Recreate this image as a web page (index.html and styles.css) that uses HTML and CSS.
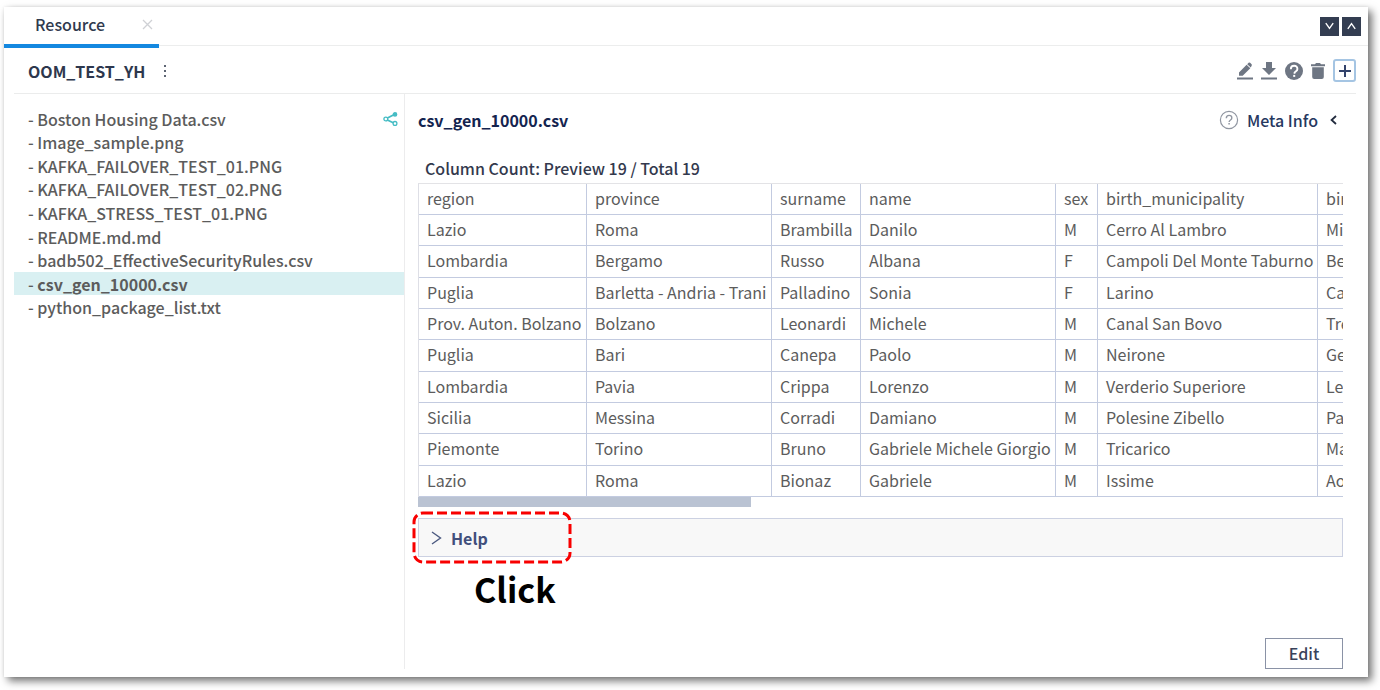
FILE: index.html
```html
<!DOCTYPE html>
<html lang="en">
<head>
<meta charset="utf-8">
<title>Resource</title>
<link rel="stylesheet" href="styles.css">
</head>
<body>
<div class="window">
  <header class="tabbar">
    <div class="tab">
      <span class="tab-name">Resource</span>
      <button class="icon-btn" aria-label="Close tab"><svg width="11" height="11" viewBox="0 0 11 11" fill="none" stroke="#cfd1d5" stroke-width="1.3"><path d="M1 1l9 9M10 1l-9 9"/></svg></button>
    </div>
    <div class="nav-buttons">
      <button class="nav-btn" aria-label="Next"><svg width="9" height="8" viewBox="0 0 9 8" fill="none" stroke="#fff" stroke-width="1.4"><path d="M.8 1.2l3.7 5.2 3.7-5.2"/></svg></button>
      <button class="nav-btn" aria-label="Previous"><svg width="9" height="8" viewBox="0 0 9 8" fill="none" stroke="#fff" stroke-width="1.4"><path d="M.8 6.8l3.7-5.2 3.7 5.2"/></svg></button>
    </div>
  </header>

  <div class="content">
    <div class="titlebar">
      <h1 class="title">OOM_TEST_YH</h1>
      <button class="icon-btn" aria-label="More"><svg width="4" height="14" viewBox="0 0 4 14" fill="#5d6573"><path d="M1 1h2v2H1zM1 6h2v2H1zM1 11h2v2H1z"/></svg></button>
      <div class="tools">
        <button class="icon-btn" aria-label="Rename"><svg width="16" height="18" viewBox="0 0 16 18" fill="#6e7683"><path d="M0 15.600h16v2H0zM2 10.600L9.600 2.800l3.700 3.400-7.600 7.500H2zM10.200 2.200l1.400-1.400q.8-.6 1.500 0l1.500 1.500q.6.8 0 1.400l-.8 1.700z"/></svg></button>
        <button class="icon-btn" aria-label="Download"><svg width="16" height="18" viewBox="0 0 16 18" fill="#6e7683"><path d="M5 0h6v6h4l-7 7-7-7h4zM0 15.600h16v2H0z"/></svg></button>
        <button class="icon-btn" aria-label="Help"><svg width="18" height="18" viewBox="0 0 18 18"><circle cx="9" cy="9" r="9" fill="#6e7683"/><path d="M5.8 7.2q0-3.4 3.3-3.4T12.4 7q0 1.3-1.4 2.3T9.2 11.6" fill="none" stroke="#fff" stroke-width="1.9"/><path d="M8.2 12.9h2v2h-2z" fill="#fff"/></svg></button>
        <button class="icon-btn" aria-label="Delete"><svg width="14" height="16" viewBox="0 0 14 16" fill="#6e7683"><path d="M0 1.2h4L5 0h4l1 1.2h4v2H0zM1.2 4.2h11.6v9.8q0 2-2 2H3.2q-2 0-2-2z"/></svg></button>
        <button class="add-btn" aria-label="Add"><svg width="12" height="12" viewBox="0 0 12 12" fill="#33436b"><path d="M5 0h2v5h5v2H7v5H5V7H0V5h5z"/></svg></button>
      </div>
    </div>

    <div class="split">
      <nav class="files">
        <ul class="file-list">
          <li class="file"><a href="#">- Boston Housing Data.csv</a>
            <svg class="share" width="15" height="14" viewBox="0 0 15 14" fill="none" stroke="#45bcc4" stroke-width="1.3"><path d="M4.4 6l6-3M4.4 8l5.8 2.8" stroke-width="1.8"/><circle cx="2.8" cy="7" r="1.9"/><circle cx="12" cy="2.4" r="1.7" fill="#45bcc4"/><circle cx="12" cy="11.4" r="1.9"/></svg></li>
          <li class="file"><a href="#">- Image_sample.png</a></li>
          <li class="file"><a href="#">- KAFKA_FAILOVER_TEST_01.PNG</a></li>
          <li class="file"><a href="#">- KAFKA_FAILOVER_TEST_02.PNG</a></li>
          <li class="file"><a href="#">- KAFKA_STRESS_TEST_01.PNG</a></li>
          <li class="file"><a href="#">- README.md.md</a></li>
          <li class="file"><a href="#">- badb502_EffectiveSecurityRules.csv</a></li>
          <li class="file selected"><a href="#">- <b>csv_gen_10000.csv</b></a></li>
          <li class="file"><a href="#">- python_package_list.txt</a></li>
        </ul>
      </nav>

      <main class="detail">
        <div class="detail-head">
          <h2 class="detail-name">csv_gen_10000.csv</h2>
          <button class="meta"><svg width="20" height="20" viewBox="0 0 20 20" fill="none" stroke="#9096a1" stroke-width="1.2"><circle cx="10" cy="10" r="8.6"/><path d="M7.3 8.2q0-2.8 2.8-2.8T12.800 8q0 1.200-1.300 2T10.100 12" stroke-width="1.400"/><path d="M10.100 13v1.600" stroke-width="1.500"/></svg><span>Meta Info</span><svg width="7" height="10" viewBox="0 0 7 10" fill="none" stroke="#222b3e" stroke-width="1.800"><path d="M6 1L1.600 5 6 9"/></svg></button>
        </div>

        <p class="count">Column Count: Preview 19 / Total 19</p>
        <div class="table-wrap">
          <table class="preview">
            <colgroup><col class="w-region"><col class="w-province"><col class="w-surname"><col class="w-name"><col class="w-sex"><col class="w-town"><col class="w-last"></colgroup>
            <thead>
              <tr><th>region</th><th>province</th><th>surname</th><th>name</th><th>sex</th><th>birth_municipality</th><th>bir</th></tr>
            </thead>
            <tbody>
              <tr><td>Lazio</td><td>Roma</td><td>Brambilla</td><td>Danilo</td><td>M</td><td>Cerro Al Lambro</td><td>Mi</td></tr>
              <tr><td>Lombardia</td><td>Bergamo</td><td>Russo</td><td>Albana</td><td>F</td><td>Campoli Del Monte Taburno</td><td>Be</td></tr>
              <tr><td>Puglia</td><td>Barletta - Andria - Trani</td><td>Palladino</td><td>Sonia</td><td>F</td><td>Larino</td><td>Ca</td></tr>
              <tr><td>Prov. Auton. Bolzano</td><td>Bolzano</td><td>Leonardi</td><td>Michele</td><td>M</td><td>Canal San Bovo</td><td>Tre</td></tr>
              <tr><td>Puglia</td><td>Bari</td><td>Canepa</td><td>Paolo</td><td>M</td><td>Neirone</td><td>Ge</td></tr>
              <tr><td>Lombardia</td><td>Pavia</td><td>Crippa</td><td>Lorenzo</td><td>M</td><td>Verderio Superiore</td><td>Le</td></tr>
              <tr><td>Sicilia</td><td>Messina</td><td>Corradi</td><td>Damiano</td><td>M</td><td>Polesine Zibello</td><td>Pa</td></tr>
              <tr><td>Piemonte</td><td>Torino</td><td>Bruno</td><td>Gabriele Michele Giorgio</td><td>M</td><td>Tricarico</td><td>Ma</td></tr>
              <tr><td>Lazio</td><td>Roma</td><td>Bionaz</td><td>Gabriele</td><td>M</td><td>Issime</td><td>Ao</td></tr>
            </tbody>
          </table>
        </div>
        <div class="scroll-thumb"></div>

        <section class="help">
          <button class="help-toggle"><svg width="11" height="14" viewBox="0 0 11 14" fill="none" stroke="#4c5a80" stroke-width="1.400"><path d="M1 1l8.500 6L1 13"/></svg><span>Help</span></button>
          <svg class="marker" width="160" height="54" viewBox="0 0 160 54" fill="none" stroke="#f80000" stroke-width="3" stroke-dasharray="10 4"><rect x="2" y="2" width="156" height="49" rx="9"/></svg>
          <span class="callout">Click</span>
        </section>

        <footer class="actions"><button class="edit-btn">Edit</button></footer>
      </main>
    </div>
  </div>
</div>
</body>
</html>
```
FILE: styles.css
```css
* { box-sizing: border-box; }

body {
  margin: 0;
  min-height: 100vh;
  padding: 7px 12px 13px 4px;
  display: flex;
  background: #fff;
  color: #5c5c5c;
  font: 500 16px/24px "Noto Sans CJK KR", "Open Sans", sans-serif;
}

button {
  font: inherit;
  color: inherit;
  border: 0;
  padding: 0;
  background: none;
  cursor: pointer;
}

svg { display: block; }

h1, h2, p, ul { margin: 0; padding: 0; }

.window {
  flex: 1;
  min-width: 0;
  display: flex;
  flex-direction: column;
  background: #fff;
  box-shadow: 4px 4px 8px rgba(0, 0, 0, .55), 0 0 3px rgba(0, 0, 0, .08);
}

.tabbar {
  display: flex;
  justify-content: space-between;
  height: 39px;
  border-bottom: 1px solid #eceded;
}

.tab {
  position: relative;
  width: 155px;
  height: 41px;
  display: flex;
  align-items: center;
  justify-content: space-between;
  padding: 0 6px 3px 31px;
  border-bottom: 4px solid #1488e0;
  color: #303a4e;
}

.nav-buttons {
  display: flex;
  align-items: center;
  gap: 3px;
  padding-right: 7px;
}

.nav-btn {
  width: 19px;
  height: 19px;
  display: grid;
  place-items: center;
  background: #333d51;
}

.content {
  flex: 1;
  display: flex;
  flex-direction: column;
  padding: 0 12px 8px 10px;
}

.titlebar {
  display: flex;
  align-items: center;
  gap: 18px;
  height: 48px;
  padding: 2px 0 0 14px;
  border-bottom: 1px solid #ebecec;
}

.title {
  color: #2d374d;
  font-size: 16px;
  font-weight: 700;
}

.tools {
  display: flex;
  align-items: center;
  gap: 8px;
  margin-left: auto;
}

.add-btn {
  width: 23px;
  height: 23px;
  display: grid;
  place-items: center;
  border: 2px solid #a5c5e3;
  border-radius: 3px;
}

.split {
  flex: 1;
  display: flex;
}

.files {
  width: 391px;
  padding-top: 13px;
  border-right: 1px solid #ececed;
}

.file-list {
  display: grid;
  grid-auto-rows: 1fr;
  min-height: 212px;
  list-style: none;
}

.file {
  display: flex;
  align-items: center;
  justify-content: space-between;
  padding: 0 6px 0 14px;
  line-height: 22px;
}

.file a { color: inherit; text-decoration: none; }

.selected { background: #d9f0f2; }

.detail {
  flex: 1;
  min-width: 0;
  display: flex;
  flex-direction: column;
  padding: 14px 13px 0 13px;
}

.detail-head {
  display: flex;
  justify-content: space-between;
  padding-right: 6px;
}

.detail-name {
  color: #14244f;
  font-size: 16px;
  font-weight: 700;
}

.meta {
  display: flex;
  align-items: center;
  gap: 8px;
  color: #26385f;
}

.meta span { margin-right: 4px; }

.count {
  padding: 24px 0 3px 7px;
  color: #33394d;
}

.table-wrap { overflow: hidden; }

.preview {
  width: 960px;
  height: 314px;
  table-layout: fixed;
  border-collapse: separate;
  border-spacing: 0;
  border-top: 1px solid #e3e3e6;
  border-left: 1px solid #dedfe6;
}

.preview th,
.preview td {
  height: 31px;
  padding: 0 0 2px 8px;
  border-right: 1px solid #c3cbe0;
  border-bottom: 1px solid #c3cbe0;
  font-weight: 400;
  text-align: left;
  white-space: nowrap;
}

.w-region { width: 168px; }
.w-province { width: 185px; }
.w-surname { width: 89px; }
.w-name { width: 195px; }
.w-sex { width: 42px; }
.w-town { width: 220px; }

.scroll-thumb {
  width: 36%;
  height: 10px;
  background: #bac3d3;
}

.help {
  position: relative;
  margin-top: 11px;
}

.help-toggle {
  width: 100%;
  height: 39px;
  display: flex;
  align-items: center;
  gap: 9px;
  padding: 0 12px;
  border: 1px solid #ccd1e2;
  background: #f8f8f8;
  color: #414f7c;
  font-weight: 700;
}

.marker {
  position: absolute;
  top: -7px;
  left: -6px;
}

.callout {
  position: absolute;
  top: 47px;
  left: 56px;
  color: #000;
  font-size: 34px;
  font-weight: 700;
  line-height: 48px;
}

.actions {
  display: flex;
  justify-content: flex-end;
  margin-top: auto;
}

.edit-btn {
  width: 78px;
  height: 31px;
  padding-bottom: 2px;
  border: 1px solid #8a92a6;
  background: #fff;
  color: #39425a;
}
```
